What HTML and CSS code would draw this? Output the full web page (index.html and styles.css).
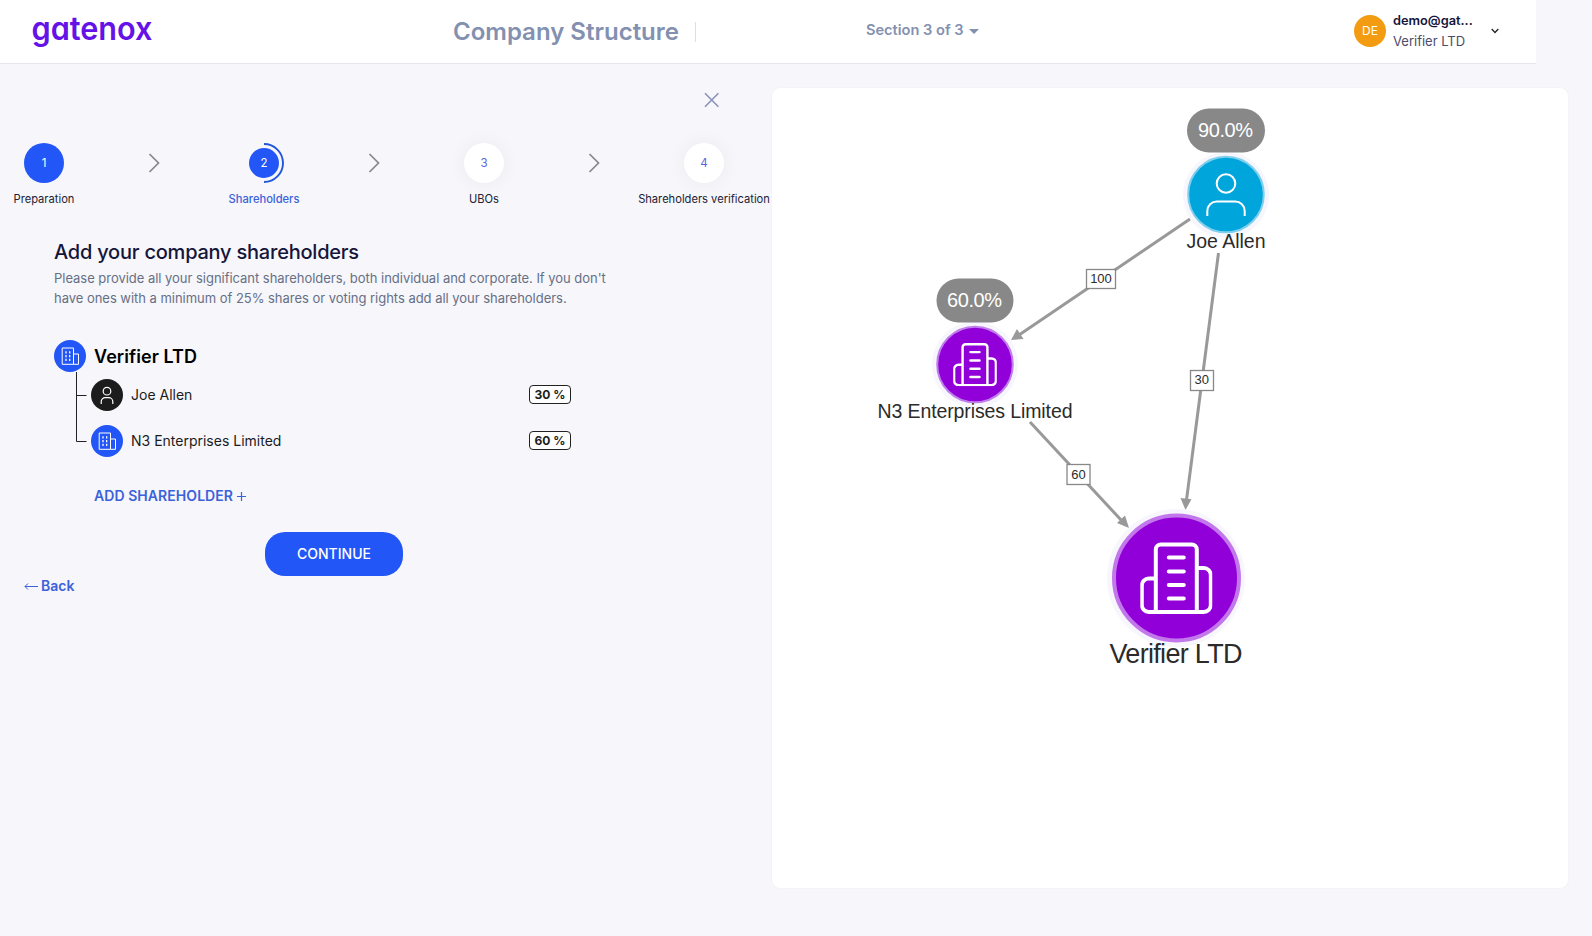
FILE: index.html
```html
<!DOCTYPE html>
<html lang="en">
<head>
<meta charset="utf-8">
<title>Company Structure</title>
<link rel="stylesheet" href="styles.css">
</head>
<body>
<svg class="defs" width="0" height="0">
  <symbol id="office" viewBox="0 0 32 32">
    <g fill="none" stroke="#fff" stroke-width="1"><path d="M8.200 8h11.300v16.300H8.200zM19.500 14h5v10.300h-5"/><path stroke-dasharray="2.200 1.500" stroke-width="1.300" d="M12 11.300v10.500M15.700 11.300v10.500"/></g>
  </symbol>
  <symbol id="tower" viewBox="-36 -36 72 72">
    <g fill="none" stroke="#fff" stroke-width="4" stroke-linejoin="round" stroke-linecap="round"><path d="M-20.5 34V-28.5a5 5 0 0 1 5-5h31a5 5 0 0 1 5 5V34M-20.5 .5h-7a7 7 0 0 0-7 7V27a7 7 0 0 0 7 7h55a7 7 0 0 0 7-7V-3a7 7 0 0 0-7-7h-7M-7.500-20.500H7.500M-7.500-6.500H7.500M-7.500 7H7.500M-7.500 20.500H7.500"/></g>
  </symbol>
</svg>

<header class="topbar">
  <div class="logo"><svg width="130" height="52"><text class="logo-text" x="-.5" y="34.300" textLength="121" lengthAdjust="spacingAndGlyphs">gatenox</text></svg></div>
  <h1 class="page-title">Company Structure</h1>
  <div class="section">Section 3 of 3<i class="caret"></i></div>
  <div class="account">
    <div class="avatar">DE</div>
    <div class="who"><strong>demo@gat...</strong><span>Verifier LTD</span></div>
    <svg class="chev" width="8" height="6" viewBox="0 0 8 6"><path d="M.7 1L4 4.500 7.300 1" fill="none" stroke="#222" stroke-width="1.300"/></svg>
  </div>
</header>

<main class="content">
  <section class="form">
    <svg class="close" width="16" height="16" viewBox="0 0 16 16"><path d="M1 1.300l13.400 13.400M14.400 1.300L1 14.700" stroke="#8b93b5" stroke-width="1.600"/></svg>
    <div class="stepper">
      <div class="step"><div class="dot done">1</div><span>Preparation</span></div>
      <svg class="arrow" viewBox="0 0 12 20"><path d="M1.500 1l9 9-9 9"/></svg>
      <div class="step active"><div class="dot current"><svg class="arc" width="40" height="40"><path d="M20 1a19 19 0 0 1 0 38" fill="none" stroke="#2356d8" stroke-width="1.900"/></svg><b>2</b></div><span>Shareholders</span></div>
      <svg class="arrow" viewBox="0 0 12 20"><path d="M1.500 1l9 9-9 9"/></svg>
      <div class="step"><div class="dot todo">3</div><span>UBOs</span></div>
      <svg class="arrow" viewBox="0 0 12 20"><path d="M1.500 1l9 9-9 9"/></svg>
      <div class="step"><div class="dot todo">4</div><span>Shareholders verification</span></div>
    </div>
    <div class="body">
      <h2>Add your company shareholders</h2>
      <p>Please provide all your significant shareholders, both individual and corporate. If you don't<br>have ones with a minimum of 25% shares or voting rights add all your shareholders.</p>
      <div class="company"><svg class="badge blue"><use href="#office"/></svg><strong>Verifier LTD</strong></div>
      <div class="tree">
        <svg class="lines" width="12" height="86"><path d="M.5 0v69.500h10M.5 23.500h10" fill="none" stroke="#222"/></svg>
        <div class="rows">
          <div class="holder"><svg class="badge black" viewBox="0 0 32 32"><g fill="none" stroke="#fff" stroke-width="1.200"><circle cx="16" cy="12.200" r="3.800"/><path d="M10.200 25v-2.300a4 4 0 0 1 4-4h3.600a4 4 0 0 1 4 4V25"/></g></svg><span>Joe Allen</span><b class="share">30 %</b></div>
          <div class="holder"><svg class="badge blue"><use href="#office"/></svg><span>N3 Enterprises Limited</span><b class="share">60 %</b></div>
        </div>
      </div>
      <a class="add">ADD SHAREHOLDER <svg width="9" height="9"><path d="M4.500 0v9M0 4.500h9" stroke="#3b62d9" stroke-width="1.200"/></svg></a>
    </div>
    <button class="continue">CONTINUE</button>
    <a class="back"><svg width="14" height="8"><path d="M4 1.500L1 4.500l3 3M1 4.500h13" fill="none" stroke="#3b62d9"/></svg>Back</a>
  </section>

  <section class="graph">
    <svg width="796" height="800" viewBox="772 88 796 800">
      <g stroke="#999" stroke-width="3">
        <path d="M1190 219L1019 335"/><path d="M1218.500 253L1186.500 500"/><path d="M1030 422L1122 521"/>
      </g>
      <g fill="#999">
        <path d="M1011 340l6-11 6.500 10z"/><path d="M1185.500 510l-5-12 11 1.200z"/><path d="M1129 528l-12-5 8-7.500z"/>
      </g>
      <g fill="#fff" stroke="#888" stroke-width="1.300">
        <rect x="1086.500" y="269.500" width="29" height="19"/><rect x="1190.500" y="370.500" width="23" height="20"/><rect x="1067" y="464.500" width="23" height="20"/>
      </g>
      <g class="edge-label">
        <text x="1101" y="283">100</text><text x="1201.800" y="384">30</text><text x="1078.500" y="478.500">60</text>
      </g>
      <g fill="#f6f6fc"><circle cx="1226" cy="195" r="43"/><circle cx="975" cy="364.500" r="43"/><circle cx="1176" cy="578" r="69"/></g>
      <g fill="#888"><rect x="1187" y="108.500" width="78" height="44" rx="22"/><rect x="936.500" y="278.500" width="77" height="44" rx="22"/></g>
      <g class="pill-label"><text x="1225.500" y="137" textLength="55">90.0%</text><text x="974.500" y="306.500" textLength="55">60.0%</text></g>
      <circle cx="1226" cy="194.500" r="37.800" fill="#00a5dc" stroke="#80cfed" stroke-width="2"/>
      <g fill="none" stroke="#fff" stroke-width="2"><circle cx="1226" cy="183.500" r="9.300"/><path d="M1207.300 216v-5a9.500 9.500 0 0 1 9.500-9.500h18.400a9.500 9.500 0 0 1 9.500 9.500v5"/></g>
      <circle cx="975" cy="364.500" r="37.800" fill="#9100d8" stroke="#c080ec" stroke-width="2"/>
      <use href="#tower" x="953.200" y="342.700" width="43.600" height="43.600"/>
      <circle cx="1176.500" cy="578" r="62.500" fill="#9100d8" stroke="#c278ea" stroke-width="4"/>
      <use href="#tower" x="1140.300" y="542" width="72" height="72"/>
      <g class="node-label">
        <text x="1226" y="248" textLength="79">Joe Allen</text>
        <text x="975" y="418" textLength="195">N3 Enterprises Limited</text>
        <text class="big" x="1176" y="663" textLength="133">Verifier LTD</text>
      </g>
    </svg>
  </section>
</main>
</body>
</html>
```
FILE: styles.css
```css
* { box-sizing: border-box; }
body { margin: 0; height: 936px; overflow: hidden; background: #f6f6fb; font-family: Inter, "Liberation Sans", sans-serif; color: #15153a; }
.defs { display: block; }
.topbar { display: grid; grid-template-columns: 453px 413px 488px 1fr; width: 1536px; height: 64px; background: #fff; border-bottom: 1px solid #e6e6ec; align-items: center; }
.logo { padding-left: 32px; height: 52px; }
.logo svg { display: block; }
.logo-text { font: 600 32px Inter, sans-serif; font-feature-settings: "cv11"; fill: #6412e8; }
.page-title { margin: 0; width: 243px; height: 20px; line-height: 20px; border-right: 1px solid #dcdfe6; font-size: 24px; font-weight: 600; color: #8390b0; white-space: nowrap; }
.section { display: flex; align-items: center; gap: 5px; font-size: 14.600px; font-weight: 600; line-height: 20px; color: #8390b0; padding-bottom: 3px; white-space: nowrap; }
.caret { border: 5px solid transparent; border-top: 5px solid #8390b0; border-bottom: 0; margin-top: 3px; }
.account { display: flex; align-items: center; padding-bottom: 2px; }
.avatar { width: 32px; height: 32px; border-radius: 50%; background: #f39c12; color: #fff; font-size: 12px; line-height: 32px; text-align: center; }
.who { display: flex; flex-direction: column; width: 98px; margin-left: 7px; font-size: 13px; line-height: 20px; }
.who strong { font-weight: 600; font-size: 12.800px; }
.who span { color: #4c4c68; }
.content { display: grid; grid-template-columns: 772px 796px; height: 872px; }
.form { display: flex; flex-direction: column; align-items: flex-start; padding-top: 28px; }
.close { margin-left: 704px; }
.stepper { display: flex; margin-top: 35px; height: 64px; }
.step { display: flex; flex-direction: column; align-items: center; width: 88px; font-size: 11.150px; white-space: nowrap; color: #222233; }
.step span { margin-top: 9px; line-height: 14px; }
.active span { font-weight: 500; color: #3b62d9; }
.arrow { width: 12px; height: 20px; margin: 10px 60px 0; fill: none; stroke: #888; stroke-width: 1.700; }
.dot { display: grid; place-items: center; width: 40px; height: 40px; border-radius: 50%; font-size: 11.500px; line-height: 38px; }
.done { background: #2356f6; color: #fff; }
.current > * { grid-area: 1 / 1; }
.current b { width: 30px; height: 30px; border-radius: 50%; background: #2356f6; color: #fff; font-weight: 400; line-height: 30px; text-align: center; }
.todo { background: #fff; color: #5664e0; box-shadow: 0 0 20px rgba(0, 0, 0, .055); }
.body { margin: 31px 0 0 54px; width: 640px; }
h2 { margin: 0; font-size: 20px; font-weight: 500; line-height: 28px; letter-spacing: -.22px; white-space: nowrap; }
p { margin: 2px 0 0; font-size: 13px; line-height: 20px; letter-spacing: -.03px; color: #667085; white-space: nowrap; }
.badge { width: 32px; height: 32px; border-radius: 50%; flex: none; }
.blue { background: #2356f6; }
.black { background: #1c1c1c; }
.company { display: flex; align-items: center; gap: 8px; margin-top: 32px; font-size: 18px; line-height: 32px; height: 32px; color: #000; }
.company strong { padding-top: 2px; font-weight: 600; letter-spacing: .07px; }
.tree { display: flex; gap: 3px; padding-left: 22px; }
.rows { display: flex; flex-direction: column; gap: 14px; padding-top: 7px; width: 480px; }
.holder { display: flex; align-items: center; gap: 8px; width: 480px; height: 32px; font-size: 14px; color: #1c1c1c; }
.holder span, .share { margin-bottom: 2px; }
.share { display: block; width: 42px; height: 19px; margin-left: auto; border: 1px solid #222; border-radius: 4px; background: #fff; font-size: 12px; font-weight: 700; line-height: 17px; text-align: center; }
.add { display: flex; align-items: center; gap: 4px; margin: 28px 0 0 40px; font-size: 14px; font-weight: 600; line-height: 20px; letter-spacing: .06px; color: #3b62d9; }
.continue { margin: 26px 0 0 265px; padding: 0 0 2px; width: 138px; height: 44px; border: 0; border-radius: 20px; background: #2356f6; color: #fff; font: 500 14px Inter, sans-serif; }
.back { display: flex; align-items: center; gap: 3px; margin-left: 24px; font-size: 14px; font-weight: 600; line-height: 20px; color: #3b62d9; }
.graph { margin-top: 24px; height: 800px; background: #fff; border-radius: 8px; box-shadow: 0 0 2px rgba(0, 0, 0, .06); }
.graph svg { display: block; }
.graph text { text-anchor: middle; font-family: "Liberation Sans", Arial, sans-serif; fill: #2b2b2b; }
.edge-label text { font-size: 13px; }
.graph .pill-label text { font-size: 20px; fill: #fff; }
.node-label text { font-size: 19.500px; }
.graph .big { font-size: 27px; }
```
